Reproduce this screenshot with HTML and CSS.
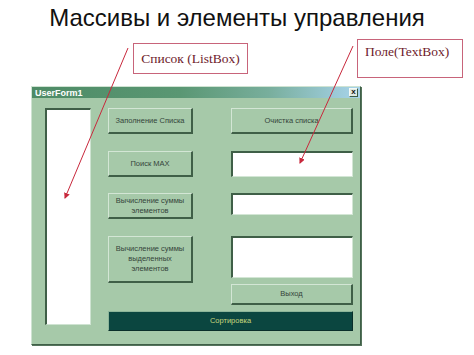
FILE: index.html
```html
<!DOCTYPE html>
<html lang="ru">
<head>
<meta charset="utf-8">
<title>Массивы и элементы управления</title>
<link rel="stylesheet" href="styles.css">
</head>
<body>
<div class="slide">
  <h1 class="title">Массивы и элементы управления</h1>
  <div class="annots">
    <div class="callout c1">Список (ListBox)</div>
    <div class="callout c2">Поле(TextBox)</div>
  </div>
  <div class="form">
    <div class="titlebar">
      <span class="caption">UserForm1</span>
      <span class="close">x</span>
    </div>
    <div class="fbody">
      <div class="listbox"></div>
      <div class="controls">
        <div class="cols">
          <div class="col col-left">
            <div class="btn h26">Заполнение Списка</div>
            <div class="btn h26 mt17">Поиск MAX</div>
            <div class="btn h26 mt16">Вычисление суммы<br>элементов</div>
            <div class="btn h47 mt17">Вычисление суммы<br>выделенных<br>элементов</div>
          </div>
          <div class="col col-right">
            <div class="btn h26">Очистка списка</div>
            <div class="tbox h26 mt17"></div>
            <div class="tbox h22 mt16"></div>
            <div class="tbox h42 mt21"></div>
            <div class="btn h21 mt6">Выход</div>
          </div>
        </div>
        <div class="sort">Сортировка</div>
      </div>
    </div>
  </div>
  <svg class="arrows" width="474" height="355" viewBox="0 0 474 355">
    <defs>
      <marker id="ah" markerWidth="6" markerHeight="6" refX="5" refY="3" orient="auto" markerUnits="userSpaceOnUse">
        <path d="M0,0 L6,3 L0,6 Z" fill="#c8283c"/>
      </marker>
    </defs>
    <line x1="128" y1="48" x2="65" y2="198" stroke="#c8283c" stroke-width="1" marker-end="url(#ah)"/>
    <line x1="353" y1="46" x2="300" y2="163" stroke="#c8283c" stroke-width="1" marker-end="url(#ah)"/>
  </svg>
</div>
</body>
</html>
```
FILE: styles.css
```css
* { box-sizing: border-box; }
html, body { margin: 0; padding: 0; background: #fff; }
.slide {
  position: relative;
  width: 474px;
  height: 355px;
  overflow: hidden;
  font-family: "Liberation Sans", Arial, sans-serif;
}
.title {
  margin: 0;
  padding-top: 3px;
  height: 33px;
  font-size: 24px;
  line-height: 30px;
  font-weight: normal;
  text-align: center;
  color: #111;
}
.annots {
  display: flex;
  align-items: flex-start;
  height: 53px;
}
.callout {
  border: 1px solid #c8647a;
  font-family: "Liberation Serif", "Times New Roman", serif;
  color: #6e1b2c;
  font-size: 13.5px;
  background: #fff;
}
.c1 {
  margin-left: 133px;
  margin-top: 10px;
  width: 115px;
  height: 31px;
  text-align: center;
  line-height: 29px;
}
.c2 {
  margin-left: 109px;
  margin-top: 6px;
  width: 106px;
  height: 39px;
  padding-left: 7px;
  padding-top: 4px;
  line-height: 16px;
}
.form {
  margin-left: 31px;
  width: 330px;
  height: 259px;
  border: 1px solid #3f5f47;
  border-top-color: #cfe3d2;
  border-left-color: #cfe3d2;
  background: #a6c9a9;
  box-shadow: 1px 1px 0 #55745c;
}
.titlebar {
  height: 11px;
  display: flex;
  align-items: center;
  justify-content: space-between;
  padding: 0 2px 0 3px;
  background: linear-gradient(to right, #4e8b66 0%, #5a9773 45%, #78ae9c 72%, #a8d4ec 100%);
}
.caption {
  color: #fff;
  font-size: 9px;
  font-weight: bold;
  line-height: 10px;
}
.close {
  width: 9px;
  height: 9px;
  background: #dfe9e2;
  border: 1px solid #3a5a43;
  border-top-color: #f6faf6;
  border-left-color: #f6faf6;
  font-size: 8px;
  font-weight: bold;
  line-height: 6px;
  text-align: center;
  color: #111;
}
.fbody {
  display: flex;
  padding-top: 10px;
  padding-left: 13px;
}
.listbox {
  width: 46px;
  height: 217px;
  background: #fff;
  border: 1px solid #cfe3d2;
  border-top: 2px solid #3f5f47;
  border-left: 2px solid #3f5f47;
}
.controls {
  margin-left: 17px;
  display: flex;
  flex-direction: column;
}
.cols {
  display: flex;
  gap: 38px;
  height: 197px;
}
.col { display: flex; flex-direction: column; }
.col-left { width: 85px; }
.col-right { width: 122px; }
.btn {
  display: flex;
  align-items: center;
  justify-content: center;
  text-align: center;
  font-size: 7.5px;
  line-height: 10px;
  color: #34443a;
  background: #a6c9a9;
  border: 1px solid #d3e6d5;
  border-right: 2px solid #3f5f47;
  border-bottom: 2px solid #3f5f47;
}
.tbox {
  background: #fff;
  border: 1px solid #d3e6d5;
  border-top: 2px solid #3f5f47;
  border-left: 2px solid #3f5f47;
}
.h21 { height: 21px; }
.h22 { height: 22px; }
.h26 { height: 26px; }
.h42 { height: 42px; }
.h47 { height: 47px; }
.mt6 { margin-top: 6px; }
.mt16 { margin-top: 16px; }
.mt17 { margin-top: 17px; }
.mt21 { margin-top: 21px; }
.sort {
  margin-top: 6px;
  width: 245px;
  height: 20px;
  background: #0b4640;
  border: 1px solid #0a2f2a;
  border-top-color: #8db59a;
  border-left-color: #8db59a;
  color: #c9d67c;
  font-size: 7.5px;
  line-height: 18px;
  text-align: center;
}
.arrows {
  position: absolute;
  left: 0;
  top: 0;
  pointer-events: none;
}
```
